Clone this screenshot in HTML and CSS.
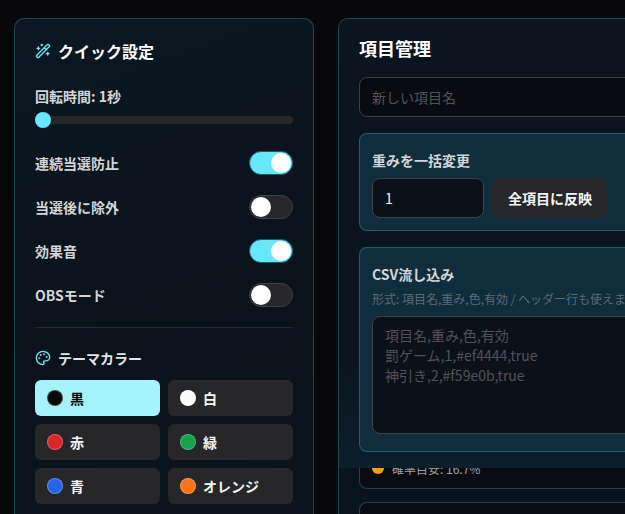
FILE: index.html
```html
<!DOCTYPE html>
<html lang="ja">
<head>
<meta charset="utf-8">
<title>クイック設定</title>
<link rel="stylesheet" href="styles.css">
</head>
<body>
<main class="layout">
  <aside class="card side">
    <h2 class="side-title">
      <svg class="icon" viewBox="0 0 24 24"><path d="m21.64 3.64-1.28-1.28a1.21 1.21 0 0 0-1.72 0L2.36 18.64a1.21 1.21 0 0 0 0 1.72l1.28 1.28a1.2 1.2 0 0 0 1.72 0L21.64 5.36a1.2 1.2 0 0 0 0-1.72"/><path d="m14 7 3 3"/><path d="M5 6v4"/><path d="M19 14v4"/><path d="M10 2v2"/><path d="M7 8H3"/><path d="M21 16h-4"/><path d="M11 3H9"/></svg>
      クイック設定
    </h2>
    <div class="spin-label">回転時間: 1秒</div>
    <div class="slider"><span class="slider-thumb"></span></div>
    <div class="rows">
      <div class="row"><span>連続当選防止</span><span class="toggle on"><i></i></span></div>
      <div class="row"><span>当選後に除外</span><span class="toggle"><i></i></span></div>
      <div class="row"><span>効果音</span><span class="toggle on"><i></i></span></div>
      <div class="row"><span>OBSモード</span><span class="toggle"><i></i></span></div>
    </div>
    <hr class="divider">
    <h3 class="theme-title">
      <svg class="icon" viewBox="0 0 24 24"><circle cx="13.5" cy="6.5" r=".5"/><circle cx="17.5" cy="10.5" r=".5"/><circle cx="8.5" cy="7.5" r=".5"/><circle cx="6.5" cy="12.5" r=".5"/><path d="M12 2C6.5 2 2 6.5 2 12s4.5 10 10 10c.926 0 1.648-.746 1.648-1.688 0-.437-.18-.835-.437-1.125-.29-.289-.438-.652-.438-1.125a1.64 1.64 0 0 1 1.668-1.668h1.996c3.051 0 5.555-2.503 5.555-5.554C21.965 6.012 17.461 2 12 2z"/></svg>
      テーマカラー
    </h3>
    <div class="themes">
      <button class="theme active"><span class="dot black"></span>黒</button>
      <button class="theme"><span class="dot white"></span>白</button>
      <button class="theme"><span class="dot red"></span>赤</button>
      <button class="theme"><span class="dot green"></span>緑</button>
      <button class="theme"><span class="dot blue"></span>青</button>
      <button class="theme"><span class="dot orange"></span>オレンジ</button>
    </div>
  </aside>

  <section class="card manage">
    <div class="manage-head">
      <h2 class="manage-title">項目管理</h2>
      <input class="field name-field" placeholder="新しい項目名">
      <div class="panel weight-panel">
        <div class="panel-title">重みを一括変更</div>
        <div class="weight-row">
          <input class="field weight-field" value="1">
          <button class="apply">全項目に反映</button>
        </div>
      </div>
      <div class="panel csv-panel">
        <div class="panel-title">CSV流し込み</div>
        <p class="hint">形式: 項目名,重み,色,有効 / ヘッダー行も使えます</p>
        <textarea class="field csv-field" placeholder="項目名,重み,色,有効&#10;罰ゲーム,1,#ef4444,true&#10;神引き,2,#f59e0b,true"></textarea>
      </div>
    </div>
    <div class="items">
      <div class="item"><span class="item-dot"></span>確率目安: 16.7%</div>
      <div class="item next"></div>
    </div>
  </section>
</main>
</body>
</html>
```
FILE: styles.css
```css
* { box-sizing: border-box; }
html, body { margin: 0; height: 514px; overflow: hidden; }
body {
  background: #08080a;
  color: #f4f4f5;
  font-family: "Noto Sans CJK JP", "Noto Sans", sans-serif;
  font-size: 14px;
}
.layout {
  display: flex;
  align-items: flex-start;
  gap: 24px;
  padding: 18px 0 0 14px;
  width: 1000px;
}
.card {
  flex: none;
  border: 1px solid rgba(103, 232, 249, 0.25);
  border-radius: 10px;
  background: linear-gradient(160deg, #0a1722 0%, #0a131c 50%, #08141e 100%);
}
.side {
  width: 300px;
  padding: 20px;
  height: 600px;
}
.icon {
  width: 16px;
  height: 16px;
  flex: none;
  fill: none;
  stroke: #67e8f9;
  stroke-width: 2;
  stroke-linecap: round;
  stroke-linejoin: round;
}
.side-title, .theme-title {
  display: flex;
  align-items: center;
  gap: 7px;
  margin: 0;
}
.side-title { font-size: 16px; font-weight: 700; height: 24px; color: #fff; }
.spin-label { margin-top: 23px; height: 20px; line-height: 20px; font-weight: 700; color: #d4d4d8; }
.slider {
  position: relative;
  height: 8px;
  margin-top: 10px;
  border-radius: 4px;
  background: #27272a;
}
.slider-thumb {
  position: absolute;
  left: 0;
  top: -4px;
  width: 16px;
  height: 16px;
  border-radius: 50%;
  background: #67e8f9;
}
.rows { margin-top: 17px; }
.row {
  display: flex;
  align-items: center;
  justify-content: space-between;
  height: 44px;
  font-weight: 700;
  color: #d4d4d8;
}
.toggle {
  display: flex;
  align-items: center;
  width: 44px;
  height: 24px;
  padding: 1px;
  border-radius: 12px;
  border: 1px solid #3f3f46;
  background: #27272a;
}
.toggle i { width: 20px; height: 20px; border-radius: 50%; background: #fff; }
.toggle.on { background: #67e8f9; border-color: #155e75; justify-content: flex-end; }
.divider { margin: 10px 0 0; border: 0; border-top: 1px solid #27272a; }
.theme-title { margin-top: 19px; height: 22px; font-size: 14px; font-weight: 700; color: #e4e4e7; }
.themes {
  display: grid;
  grid-template-columns: 1fr 1fr;
  gap: 8px;
  margin-top: 11px;
}
.theme {
  display: flex;
  align-items: center;
  gap: 7px;
  height: 36px;
  padding: 0 12px;
  border: 0;
  border-radius: 6px;
  background: #27272a;
  color: #f4f4f5;
  font: 700 14px "Noto Sans CJK JP", sans-serif;
}
.theme.active { background: #a5f3fc; color: #0a0a0a; }
.dot { width: 16px; height: 16px; border-radius: 50%; border: 1px solid rgba(255, 255, 255, 0.25); }
.black { background: #0a0a0a; }
.white { background: #fafafa; }
.red { background: #dc2626; }
.green { background: #16a34a; }
.blue { background: #2563eb; }
.orange { background: #f97316; }

.manage { width: 600px; padding: 0; height: 600px; overflow: hidden; }
.manage-head {
  position: relative;
  z-index: 1;
  padding: 19px 20px 16px;
  background: linear-gradient(180deg, #0a1520 0%, #0a141e 75%, #0c1f2c 100%);
}
.manage-title { margin: 0; height: 21px; line-height: 21px; font-size: 18px; font-weight: 700; color: #fff; }
.field {
  display: block;
  border: 1px solid #3f3f46;
  border-radius: 8px;
  outline: 0;
  font: 400 14px/20px "Noto Sans CJK JP", sans-serif;
  color: #f4f4f5;
}
.field::placeholder { color: #52525b; }
.name-field {
  width: 100%;
  height: 40px;
  margin-top: 18px;
  padding: 0 12px;
  background: #090b10;
}
.panel {
  margin-top: 16px;
  padding: 16px 12px 12px;
  border: 1px solid rgba(103, 232, 249, 0.25);
  border-radius: 8px;
  background: #0f2d3d;
}
.panel-title { height: 20px; line-height: 20px; font-weight: 700; color: #d4d4d8; }
.weight-panel { height: 98px; }
.weight-row { display: flex; gap: 8px; margin-top: 8px; }
.weight-field { width: 112px; height: 40px; padding: 0 12px; background: #0b1118; }
.apply {
  width: 116px;
  height: 40px;
  border: 0;
  border-radius: 8px;
  background: #27272a;
  color: #f4f4f5;
  font: 700 14px "Noto Sans CJK JP", sans-serif;
}
.csv-panel { height: 205px; }
.hint { margin: 6px 0 0; height: 18px; line-height: 18px; font-size: 12px; color: #5b6b76; white-space: nowrap; }
.csv-field {
  width: 100%;
  height: 118px;
  margin-top: 8px;
  padding: 8px 12px;
  resize: none;
  background: #0b1118;
}
.items { padding: 0 20px; margin-top: -39px; }
.item {
  display: flex;
  align-items: center;
  gap: 8px;
  height: 60px;
  padding: 18px 12px 0;
  border: 1px solid rgba(103, 232, 249, 0.25);
  border-radius: 8px;
  background: #090d13;
  font-size: 12px;
  color: #a1a1aa;
}
.item-dot { width: 12px; height: 12px; border-radius: 50%; background: #f59e0b; }
.next { margin-top: 13px; padding: 0; }
```
